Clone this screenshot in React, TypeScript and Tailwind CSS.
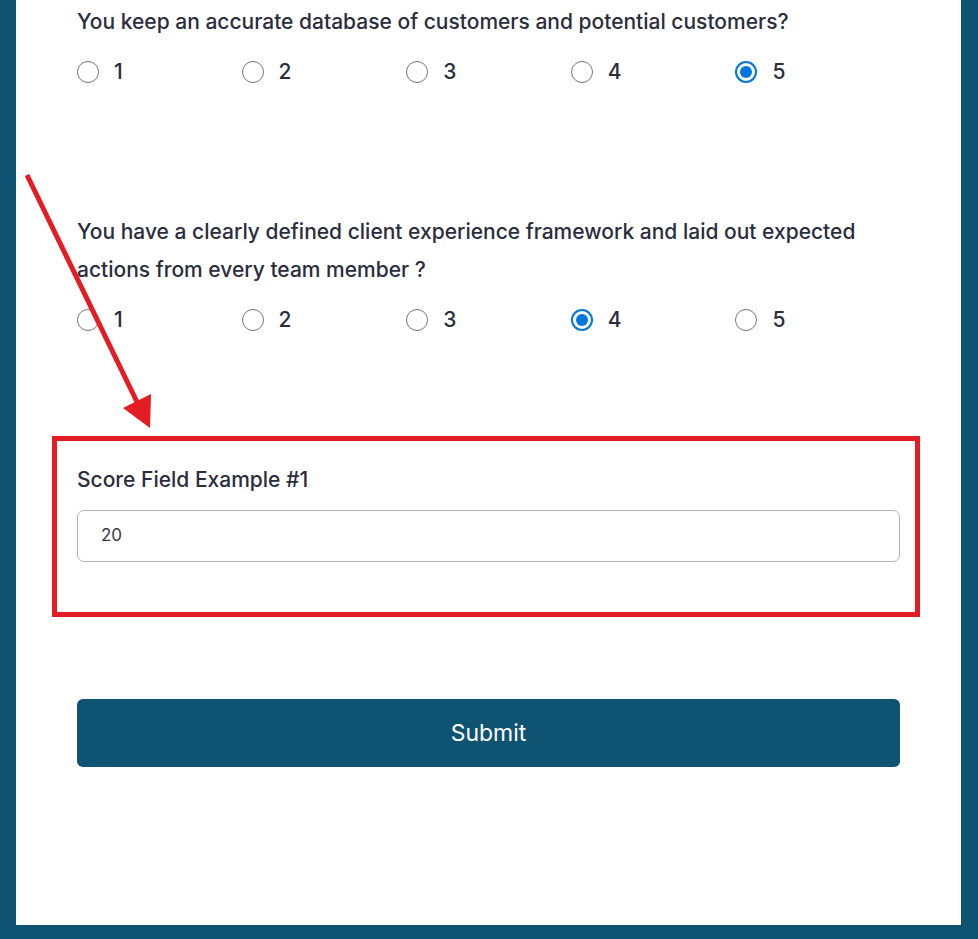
import React from 'react';

const options = [1, 2, 3, 4, 5];

function Radio({ checked }: { checked: boolean }) {
  return checked ? (
    <span className="flex h-[22px] w-[22px] items-center justify-center rounded-full border-2 border-[#0075db] bg-white">
      <span className="h-[12px] w-[12px] rounded-full bg-[#0075db]" />
    </span>
  ) : (
    <span className="h-[22px] w-[22px] rounded-full border-[1.5px] border-[#767676] bg-white" />
  );
}

function Question({ text, value }: { text: string; value: number }) {
  return (
    <div>
      <p className="text-[21px] leading-[38px] font-medium text-[#2a2d3c]">{text}</p>
      <div className="mt-[20px] grid grid-cols-5">
        {options.map(n => (
          <label key={n} className="flex h-[22px] items-center gap-[15px] text-[21px] font-medium text-[#2a2d3c]">
            <Radio checked={n === value} />
            <span>{n}</span>
          </label>
        ))}
      </div>
    </div>
  );
}

export default function App() {
  return (
    <div className="relative min-h-[939px] bg-[#0e5371] pb-[14px] pl-4 pr-[17px] font-['Inter',sans-serif]">
      <div className="h-[925px] bg-white px-[61px] pt-[3px]">
        <Question text="You keep an accurate database of customers and potential customers?" value={5} />

        <div className="mt-[130px]">
          <Question
            text="You have a clearly defined client experience framework and laid out expected actions from every team member ?"
            value={4}
          />
        </div>

        {/* highlighted score field */}
        <div className="mt-[105px] ml-[-25px] mr-[-20px] border-[5px] border-[#e41c23] pl-[20px] pr-[15px] pt-[22px] pb-[50px]">
          <p className="text-[21px] leading-[34px] font-medium text-[#2a2d3c]">Score Field Example #1</p>
          <div className="mt-[13px] flex h-[52px] items-center rounded-[7px] border border-[#b3b3b3] px-[23px] text-[17px] text-[#3a3a46]">
            20
          </div>
        </div>

        <button className="mt-[82px] flex h-[68px] w-full items-center justify-center rounded-[6px] bg-[#0e5371] text-[23px] text-white">
          Submit
        </button>
      </div>

      <svg className="pointer-events-none absolute left-0 top-0" width="978" height="939" viewBox="0 0 978 939">
        <line x1="27" y1="175" x2="138" y2="404" stroke="#e41c23" strokeWidth="5" />
        <polygon points="123,408 151,394 150,428" fill="#e41c23" />
      </svg>
    </div>
  );
}
